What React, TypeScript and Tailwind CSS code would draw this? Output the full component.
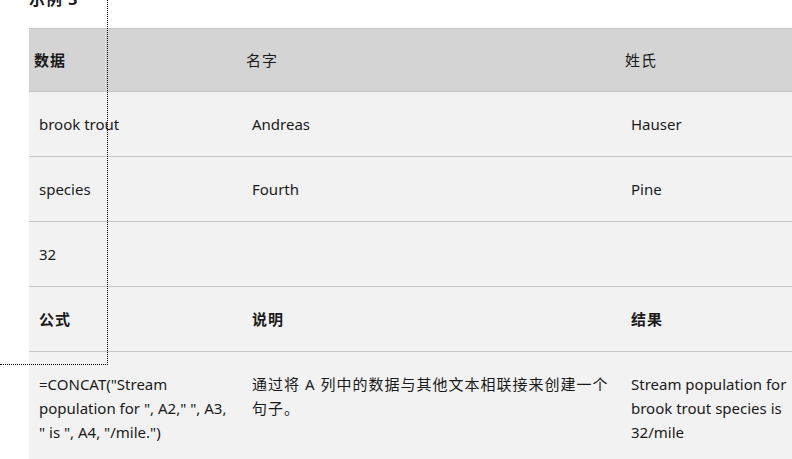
const rows = [
  ['brook trout', 'Andreas', 'Hauser'],
  ['species', 'Fourth', 'Pine'],
  ['32', '', ''],
];

export default function App() {
  return (
    <div
      className="relative w-[792px] h-[459px] overflow-hidden bg-white text-[15px] leading-6 text-[#1a1a1a]"
      style={{ fontFamily: '"Segoe UI", "Noto Sans", "Noto Sans CJK SC", sans-serif' }}
    >
      <div className="pl-[29px] -mt-[13px] h-[41px] text-[16px] font-bold tracking-[1px]">示例 3</div>
      <table className="ml-[29px] border-collapse table-fixed w-[776px] bg-[#f2f2f2]">
        <colgroup>
          <col className="w-[213px]" />
          <col className="w-[379px]" />
          <col className="w-[184px]" />
        </colgroup>
        <thead>
          <tr className="bg-[#d4d4d4] border-t border-[#c6c6c6]">
            <th className="text-left font-bold px-[5px] py-[19px] tracking-[1px]">数据</th>
            <th className="text-left font-normal pl-[4px] pr-[5px] py-[19px] tracking-[1px]">名字</th>
            <th className="text-left font-normal pl-[4px] pr-[5px] py-[19px] tracking-[1px]">姓氏</th>
          </tr>
        </thead>
        <tbody>
          {rows.map((r, i) => (
            <tr key={i} className="border-t border-[#c6c6c6]">
              {r.map((c, j) => (
                <td key={j} className="px-[10px] py-[20px] align-top h-[64px]">{c}</td>
              ))}
            </tr>
          ))}
          <tr className="border-t border-[#c6c6c6]">
            <td className="px-[10px] py-[20px] font-bold tracking-[1px]">公式</td>
            <td className="px-[10px] py-[20px] font-bold tracking-[1px]">说明</td>
            <td className="px-[10px] py-[20px] font-bold tracking-[1px]">结果</td>
          </tr>
          <tr className="border-t border-[#c6c6c6]">
            <td className="px-[10px] py-[20px] align-top">=CONCAT("Stream population for ", A2," ", A3, " is ", A4, "/mile.")</td>
            <td className="px-[10px] py-[20px] align-top tracking-[1px]">通过将 A 列中的数据与其他文本相联接来创建一个句子。</td>
            <td className="px-[10px] py-[20px] align-top">Stream population for brook trout species is 32/mile</td>
          </tr>
        </tbody>
      </table>
      <div className="absolute left-[107px] top-0 h-[365px] border-l border-dotted border-black" />
      <div className="absolute left-0 top-[364px] w-[108px] border-t border-dotted border-black" />
    </div>
  );
}
